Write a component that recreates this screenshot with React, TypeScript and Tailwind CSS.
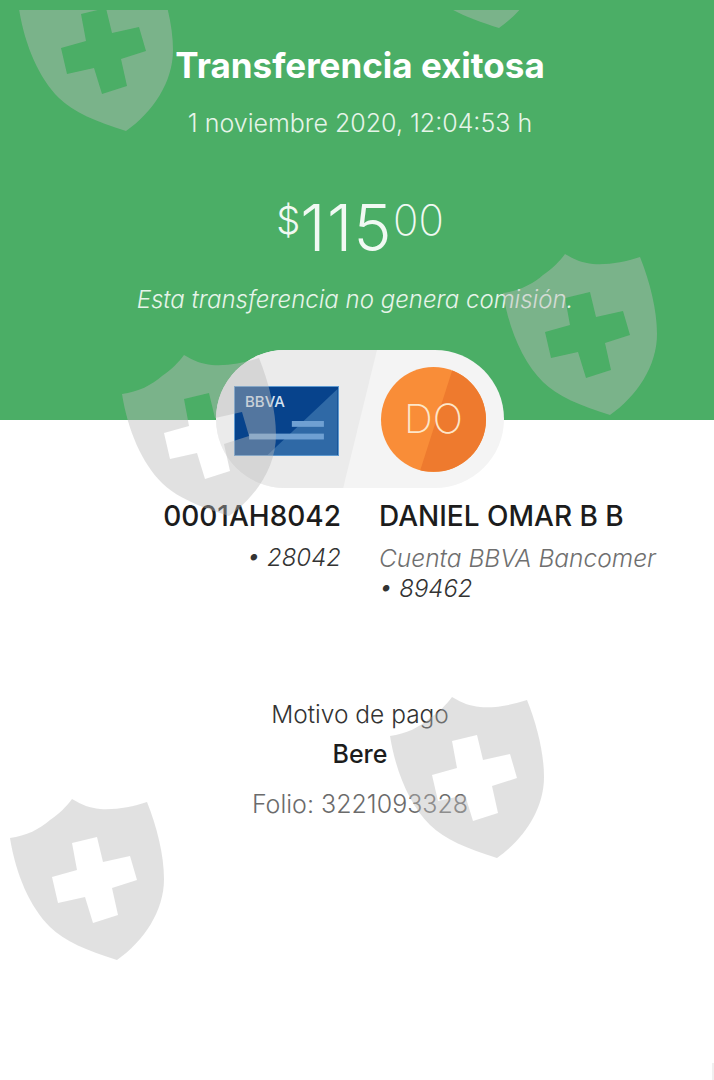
const shieldPath =
  'M0 39C16 37 30 30 40 21C50 14 56 8 62 0C72 6 80 9 90 10C106 11 122 8 137 3C147 28 154 56 154 80C154 112 134 142 107 161C78 152 54 142 40 128C20 108 6 76 0 39Z' +
  'M62 44L87 38L93 63L120 57L127 81L102 89L108 116L83 124L75 98L48 104L42 78L67 71Z';

function Shield({ className }: { className: string }) {
  return (
    <svg viewBox="0 0 156 162" className={`pointer-events-none absolute h-[162px] w-[156px] ${className}`}>
      <path d={shieldPath} fill="#b9b9b9" fillOpacity="0.43" fillRule="evenodd" />
    </svg>
  );
}

function BankCard() {
  return (
    <div className="relative h-[70px] w-[105px] overflow-hidden border border-[#5f9ad0] bg-[#07438c]">
      <svg viewBox="0 0 105 70" className="absolute inset-0 h-full w-full">
        <path d="M33 70L105 2V70Z" fill="#2f69a6" />
        <rect x="58" y="35" width="33" height="6" fill="#6fa0d2" />
        <rect x="14" y="48" width="77" height="6" fill="#6fa0d2" />
      </svg>
      <span className="absolute left-[10px] top-[4px] text-[15px] font-medium text-[#d5e2f0]">BBVA</span>
    </div>
  );
}

function Avatar() {
  return (
    <div className="relative flex h-[105px] w-[105px] items-center justify-center overflow-hidden rounded-full bg-[#f98d38]">
      <div className="absolute inset-0 bg-[#ee7a2e] [clip-path:polygon(69%_0,100%_0,100%_100%,37%_100%)]" />
      <span className="relative text-[40px] font-extralight text-[#fde6c9]">DO</span>
    </div>
  );
}

export default function App() {
  return (
    <div className="relative min-h-[1080px] w-[714px] overflow-hidden bg-white font-['Inter',sans-serif]">
      {/* Green header */}
      <section className="flex h-[420px] flex-col items-center bg-[#4bae66] pl-[6px] pt-[41px] text-white">
        <h1 className="text-[35px] font-bold leading-[48px]">Transferencia exitosa</h1>
        <p className="mt-[19px] text-[25px] font-light leading-[30px] text-[#e6f4e9]">1 noviembre 2020, 12:04:53 h</p>
        <div className="mt-[53px] flex h-[80px] items-start font-light text-[#f1f9f3]">
          <span className="mt-[5px] text-[38px] leading-[48px]">$</span>
          <span className="mt-[-3px] text-[64px] leading-[80px] tracking-[1.5px]">115</span>
          <span className="mt-[5px] text-[42px] font-extralight leading-[48px]">00</span>
        </div>
        <p className="-ml-[10px] mt-[14px] text-[24px] font-light italic leading-[30px] text-[#e6f4e9]">Esta transferencia no genera comisión.</p>
      </section>

      {/* Transfer pill */}
      <div className="relative -mt-[70px] ml-[216px] flex h-[138px] w-[288px] items-center overflow-hidden rounded-full bg-[#f4f4f4]">
        <div className="absolute left-0 top-0 h-[138px] w-[161px] bg-[#ebebeb] [clip-path:polygon(0_0,100%_0,79%_100%,0_100%)]" />
        <div className="relative ml-[18px] mt-[3px]"><BankCard /></div>
        <div className="relative ml-[42px]"><Avatar /></div>
      </div>

      {/* Accounts */}
      <div className="mt-[10px] grid grid-cols-[341px_1fr] gap-x-[38px] text-[24px]">
        <div className="text-right">
          <p className="text-[28px] font-medium leading-[36px] text-[#1c1c1c]">0001AH8042</p>
          <p className="mt-[9px] font-light italic leading-[30px] text-[#333333]">• 28042</p>
        </div>
        <div>
          <p className="text-[28px] font-medium leading-[36px] text-[#1c1c1c]">DANIEL OMAR B B</p>
          <p className="mt-[9px] text-[24.5px] font-light italic leading-[30px] text-[#6f6f6f]">Cuenta BBVA Bancomer</p>
          <p className="font-light italic leading-[32px] text-[#333333]">• 89462</p>
        </div>
      </div>

      {/* Payment detail */}
      <div className="mt-[94px] flex flex-col items-center pl-[6px] text-[24.5px]">
        <p className="font-light leading-[30px] text-[#333333]">Motivo de pago</p>
        <p className="mt-[10px] text-[25px] font-medium leading-[30px] text-[#1c1c1c]">Bere</p>
        <p className="mt-[20px] text-[25px] font-light leading-[30px] text-[#6b6b6b]">Folio: 3221093328</p>
      </div>

      {/* Watermarks */}
      <Shield className="left-[19px] top-[-30px] [clip-path:inset(40px_0_0_0)]" />
      <Shield className="left-[392px] top-[-133px] [clip-path:inset(143px_0_0_0)]" />
      <Shield className="left-[503px] top-[254px]" />
      <Shield className="left-[122px] top-[355px]" />
      <Shield className="left-[390px] top-[697px]" />
      <Shield className="left-[10px] top-[799px]" />

      <div className="absolute right-0 top-[1063px] h-[17px] w-[2px] bg-[#f0f0f0]" />
    </div>
  );
}
